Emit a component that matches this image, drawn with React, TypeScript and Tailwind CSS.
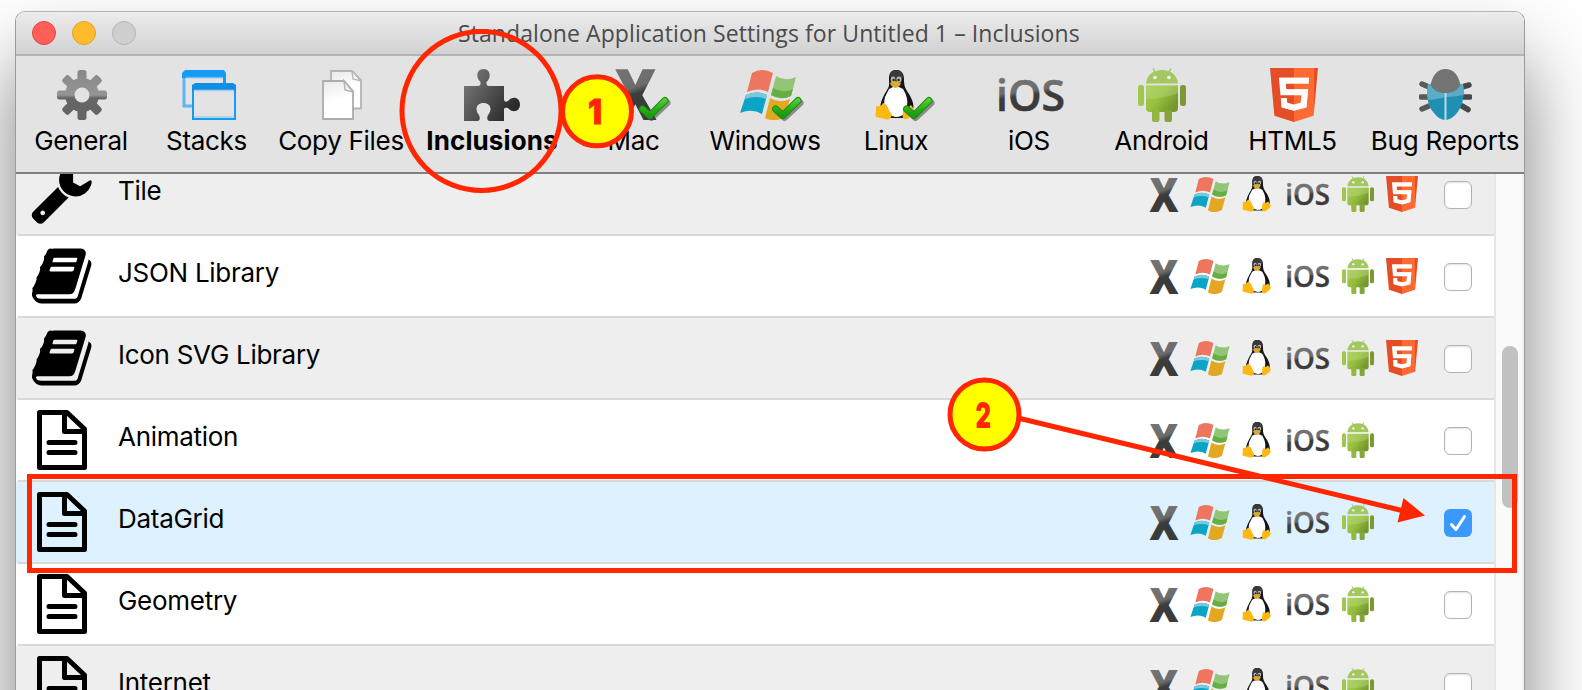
import type { ReactNode } from "react";

/* ---------- shared gradients ---------- */

function Defs() {
  return (
    <svg className="absolute h-0 w-0">
      <defs>
        <linearGradient id="metal" x1="0" y1="0" x2="0.15" y2="1">
          <stop offset="0" stopColor="#7c7c7c" />
          <stop offset="0.5" stopColor="#6c6c6c" />
          <stop offset="0.58" stopColor="#3c3c3c" />
          <stop offset="1" stopColor="#3a3a3a" />
        </linearGradient>
        <linearGradient id="gear" x1="0" y1="0" x2="0" y2="1">
          <stop offset="0" stopColor="#878787" />
          <stop offset="0.5" stopColor="#959595" />
          <stop offset="0.56" stopColor="#666" />
          <stop offset="1" stopColor="#636363" />
        </linearGradient>
        <linearGradient id="puzzle" x1="0" y1="0.2" x2="1" y2="0.8">
          <stop offset="0" stopColor="#787878" />
          <stop offset="0.9" stopColor="#2a2a2a" />
        </linearGradient>
        <linearGradient id="paper" x1="0" y1="0" x2="0.3" y2="1">
          <stop offset="0" stopColor="#e9e9e9" />
          <stop offset="0.6" stopColor="#ffffff" />
        </linearGradient>
        <linearGradient id="droid" x1="0" y1="0" x2="1" y2="0.6">
          <stop offset="0" stopColor="#a5cb55" />
          <stop offset="0.5" stopColor="#97c03d" />
          <stop offset="1" stopColor="#76962f" />
        </linearGradient>
        <linearGradient id="shield" x1="0" y1="0" x2="1" y2="0">
          <stop offset="0.5" stopColor="#e44d26" />
          <stop offset="0.5" stopColor="#ff6a33" />
          <stop offset="0.91" stopColor="#ff6a33" />
          <stop offset="0.91" stopColor="#e44d26" />
        </linearGradient>
        <linearGradient id="tick" x1="0" y1="0" x2="0" y2="1">
          <stop offset="0" stopColor="#4fcb2e" />
          <stop offset="0.6" stopColor="#27ad15" />
          <stop offset="1" stopColor="#1b9a10" />
        </linearGradient>
      </defs>
    </svg>
  );
}

/* ---------- platform logos ---------- */

function MacIcon({ className }: { className: string }) {
  return (
    <svg className={`overflow-visible ${className}`} viewBox="0 0 28 34" preserveAspectRatio="none">
      <text x="-0.500" y="34" fontSize="47.6" fontFamily="Open Sans" fontWeight="800" textLength="29" lengthAdjust="spacingAndGlyphs" fill="url(#metal)">
        X
      </text>
    </svg>
  );
}

function WindowsIcon({ className }: { className: string }) {
  return (
    <svg className={className} viewBox="0 0 56 50">
      <path d="M12 3 Q22 -3 33 3 L28 22 Q18 17 7 22Z" fill="#ee765e" />
      <path d="M36 6 Q45 12 56 7 L51 26 Q41 31 31 25Z" fill="#92c578" />
      <path d="M33 18 Q43 24 53 19 L51 26 Q41 31 31 25Z" fill="#66ae43" />
      <path d="M6 25 Q16 20 27 25 L22 44 Q12 38 0 43Z" fill="#0aa5c6" />
      <path d="M6 25 Q16 20 27 25 L26 29 Q16 25 5 29Z" fill="#7cc7dc" />
      <path d="M30 28 Q40 34 50 29 L45 47 Q35 53 25 48Z" fill="#e2a824" />
    </svg>
  );
}

function LinuxIcon({ className }: { className: string }) {
  return (
    <svg className={className} viewBox="0 0 40 50">
      <path d="M14 9 C14 2 17 0 21 0 C26 0 29 3 29 9 C29 16 30 18 34 24 C38 31 40 36 37 42 L30 48 H12 L5 38 C6 30 9 25 12 20 C15 16 14 13 14 9Z" fill="#151515" />
      <path d="M15 6 C15 2 18 0 21 0 C26 0 28 3 28 7 L27 9 H16Z" fill="#3a3a3a" />
      <path d="M14 19 Q21 14 28 19 C31 24 33 29 32 36 L28 45 Q20 50 13 43 C8 38 9 31 10 27Z" fill="#fff" />
      <ellipse cx="18" cy="9.500" rx="2.300" ry="3" fill="#b4b4b4" />
      <ellipse cx="24" cy="9.500" rx="2.600" ry="3" fill="#b4b4b4" />
      <circle cx="18.600" cy="10" r="1.200" fill="#222" />
      <circle cx="23.600" cy="10" r="1.200" fill="#222" />
      <path d="M15 13 Q20 9 26 13 Q25 17 20.500 18 Q16 17 15 13Z" fill="#dba92b" />
      <path d="M1 36 Q6 37 8 33 Q12 34 14 40 L17 45 Q15 51 10 49 L1 47 Q0 45 1 42Z" fill="#fdb813" />
      <path d="M29 36 Q33 39 36 35 Q38 38 40 41 Q39 45 35 47 Q31 51 28 48 Q27 44 29 36Z" fill="#fdb813" />
    </svg>
  );
}

function IosIcon({ className }: { className: string }) {
  return (
    <svg className={`overflow-visible ${className}`} viewBox="0 0 64 34">
      <text x="-3" y="33" fontSize="44" fontFamily="Open Sans" fontWeight="600" textLength="69" lengthAdjust="spacingAndGlyphs" fill="url(#metal)" stroke="url(#metal)" strokeWidth="0.600">
        iOS
      </text>
    </svg>
  );
}

function AndroidIcon({ className }: { className: string }) {
  return (
    <svg className={className} viewBox="0 0 48 54">
      <path d="M15 0.500 L17 4 M33 0.500 L31 4" stroke="#a2c65a" strokeWidth="1.500" />
      <path d="M8 15.500 C9 7 15 2 24 2 C33 2 39 7 40 15.500Z" fill="#a3c761" />
      <circle cx="17" cy="9.500" r="1.800" fill="#f4f8ea" />
      <circle cx="31" cy="9.500" r="1.800" fill="#f4f8ea" />
      <path d="M8 17.500 H40 V40 Q40 44 36 44 H12 Q8 44 8 40Z" fill="url(#droid)" />
      <path d="M8 17.500 H40 V25 Q24 31 8 31Z" fill="#c3dd8d" opacity="0.35" />
      <rect x="0" y="17" width="6" height="21" rx="2.500" fill="#a1c64f" />
      <rect x="42" y="17" width="6" height="21" rx="2.500" fill="#7b9a35" />
      <rect x="14" y="42" width="7.500" height="12" rx="2" fill="#93b83f" />
      <rect x="26.500" y="42" width="7.500" height="12" rx="2" fill="#84a638" />
    </svg>
  );
}

function Html5Icon({ className }: { className: string }) {
  return (
    <svg className={className} viewBox="0 0 384 448" preserveAspectRatio="none">
      <path d="M60 70 H325 L305 340 L192 370 L80 340Z" fill="#fff" />
      <path
        d="M0 0l34.900 395.800L191.500 448l157.600-52.200L384 0H0zm308.200 127.900H124.400l4.100 49.400h175.600l-13.600 148.400-97.900 27v.3h-1.100l-98.700-27.300-6-75.800h47.700L138 288l53.500 14.500 53.700-14.500 6-62.200H84.300L71.500 80.200h241.100l-4.400 47.700z"
        fill="url(#shield)"
      />
      <path d="M76 86 H308 L304 124 H120 L127 183 H300 L287 323 L192 349 L98 323 L93 254 H134" fill="none" stroke="#fff" strokeWidth="10" />
    </svg>
  );
}

/* ---------- toolbar icons ---------- */

function GearIcon() {
  return (
    <svg className="ml-[2px] h-[50px] w-[50px]" viewBox="0 0 50 50">
      <mask id="gearMask">
        {[0, 45, 90, 135].map((a) => (
          <rect key={a} x="20.500" y="0" width="9" height="50" rx="2.500" fill="#fff" transform={`rotate(${a} 25 25)`} />
        ))}
        <circle cx="25" cy="25" r="17" fill="#fff" />
        <circle cx="25" cy="25" r="7.500" fill="#000" />
      </mask>
      <rect width="50" height="50" fill="url(#gear)" mask="url(#gearMask)" />
    </svg>
  );
}

function StacksIcon() {
  return (
    <svg className="h-[50px] w-[54px]" viewBox="0 0 54 50">
      <path d="M2 6 V36 H12" fill="none" stroke="#5cb6f3" strokeWidth="3" />
      <path d="M0 8 V3 L3 0 H42 L44 3 V13 H41 V8Z" fill="#149bf5" />
      <path d="M4 7.500 H41" stroke="#6ab9ee" strokeWidth="1.500" />
      <rect x="11" y="17" width="42" height="32" fill="#e3e3e3" stroke="#149bf5" strokeWidth="2" />
      <path d="M10 21 V15 L13 13 H51 L54 15 V21Z" fill="#108ee6" />
      <path d="M12 20.500 H52 M12 47 H52" stroke="#a5cfea" strokeWidth="1.500" />
    </svg>
  );
}

function CopyIcon() {
  return (
    <svg className="ml-[1px] h-[50px] w-[40px]" viewBox="0 0 40 50">
      <path d="M9 1 H30 L39 10 V38.500 H9Z" fill="url(#paper)" stroke="#b4b4b4" strokeWidth="1.800" />
      <path d="M30 1 L31 9 L39 11Z" fill="#fafafa" stroke="#b9b9b9" strokeWidth="1.500" />
      <path d="M1 11 H22 L31 21 V49 H1Z" fill="url(#paper)" stroke="#acacac" strokeWidth="1.800" />
      <path d="M22 11 L23 20 L31 22Z" fill="#f4f4f4" stroke="#b4b4b4" strokeWidth="1.500" />
    </svg>
  );
}

function PuzzleIcon() {
  return (
    <svg className="h-[52px] w-[56px]" viewBox="0 0 56 52">
      <path
        d="M0 17 H14 Q17 17 16.500 13 C11 8 13 0 19.500 0 C26 0 28 8 22.500 13 Q22 17 25 17 H40 V31 Q41 34 44 32 C49 26 56 29 56 35.500 C56 42 49 45 44 39 Q41 38 40 40 V52 H25 Q22 51 24 46 C29 40 26 34 19.500 34 C13 34 10 40 15 46 Q17 51 14 52 H0 Z"
        fill="url(#puzzle)"
      />
    </svg>
  );
}

function BugIcon() {
  return (
    <svg className="h-[52px] w-[53px]" viewBox="0 0 53 52">
      <path d="M10 18 L3 15 M9 28 H2 M10 37 L3 40" stroke="#5a5a5a" strokeWidth="5.500" strokeLinecap="round" />
      <path d="M43 18 L50 16 M44 28 H51 M43 37 L49 40.500" stroke="#484848" strokeWidth="5.500" strokeLinecap="round" />
      <path d="M9 15 H44 C46 28 43 38 38 44 Q32 51 26.500 51 Q20 51 15 44 C9 38 7 28 9 15Z" fill="#1f8fb3" />
      <path d="M9 15 H44 Q45.500 21 44.500 26 Q35 28 26.500 28 Q20 30 9 31 Q7 24 9 15Z" fill="#5aacc8" />
      <path d="M26.500 24 V51" stroke="#b5dbe8" strokeWidth="2" />
      <path d="M11.500 16 C14 5 19 0 26.500 0 C34 0 39 5 41.500 16 C38 22 33 24 26.500 24 C20 24 15 22 11.500 16Z" fill="#737373" />
    </svg>
  );
}

function GreenTick({ className }: { className: string }) {
  return (
    <svg className={`overflow-visible ${className}`} viewBox="0 0 32 26">
      <path d="M5.500 14 L12.500 20.500 L28 6" fill="none" stroke="#444" strokeOpacity="0.55" strokeWidth="7" strokeLinejoin="round" strokeLinecap="round" />
      <path d="M3.500 12 L11 18.500 L26 3.500" fill="none" stroke="#1c8d12" strokeWidth="7" strokeLinejoin="round" strokeLinecap="round" />
      <path d="M3.500 12 L11 18.500 L26 3.500" fill="none" stroke="url(#tick)" strokeWidth="5" strokeLinejoin="round" strokeLinecap="round" />
    </svg>
  );
}

function Ticked({ children, tick }: { children: ReactNode; tick: string }) {
  return (
    <div className="relative">
      {children}
      <GreenTick className={tick} />
    </div>
  );
}

type Tool = { label: string; box: string; icon: ReactNode; text?: string };

const tools: Tool[] = [
  { label: "General", box: "w-[130px]", icon: <GearIcon /> },
  { label: "Stacks", box: "w-[121px]", icon: <div className="pl-[4px]"><StacksIcon /></div> },
  { label: "Copy Files", box: "w-[148px]", icon: <CopyIcon /> },
  { label: "Inclusions", box: "w-[153px]", icon: <PuzzleIcon />, text: "pl-[1px] font-bold tracking-[0.1px]" },
  {
    label: "Mac",
    box: "w-[131px]",
    icon: (
      <Ticked tick="absolute left-[28px] top-[27px] h-[26px] w-[32px]">
        <MacIcon className="ml-[4px] h-[50px] w-[41px]" />
      </Ticked>
    ),
  },
  {
    label: "Windows",
    box: "w-[132px]",
    icon: (
      <Ticked tick="absolute left-[38px] top-[27px] h-[26px] w-[32px]">
        <WindowsIcon className="ml-[6px] h-[50px] w-[56px]" />
      </Ticked>
    ),
  },
  {
    label: "Linux",
    box: "w-[130px]",
    icon: (
      <Ticked tick="absolute left-[28px] top-[27px] h-[26px] w-[32px]">
        <LinuxIcon className="mr-[3px] h-[50px] w-[40px]" />
      </Ticked>
    ),
  },
  { label: "iOS", box: "w-[136px]", icon: <IosIcon className="ml-[4px] h-[34px] w-[64px]" /> },
  { label: "Android", box: "w-[129px]", icon: <AndroidIcon className="h-[54px] w-[48px]" /> },
  { label: "HTML5", box: "w-[133px]", icon: <Html5Icon className="ml-[3px] h-[54px] w-[48px]" /> },
  { label: "Bug Reports", box: "w-[172px]", icon: <BugIcon />, text: "tracking-[-0.2px]" },
];

/* ---------- list ---------- */

function WrenchIcon() {
  return (
    <svg className="mt-[5px] ml-[13px] h-[65.500px] w-[65.500px] shrink-0" viewBox="0 0 1792 1792">
      <path d="M384 1472q0-26-19-45t-45-19-45 19-19 45 19 45 45 19 45-19 19-45zm644-420l-682 682q-37 37-90 37-52 0-91-37l-106-108q-38-36-38-90 0-53 38-91l681-681q39 98 114.500 173.500t173.500 114.500zm634-435q0 39-23 106-47 134-164.500 217.500t-258.500 83.500q-185 0-316.500-131.500t-131.500-316.500 131.500-316.500 316.500-131.500q58 0 121.500 16.500t107.500 46.500q16 11 16 28t-16 28l-293 169v224l193 107q5-3 79-48.500t135.500-81 70.500-35.500q15 0 23.500 10t8.500 25z" />
    </svg>
  );
}

function BookIcon() {
  return (
    <svg className="mt-[8px] ml-[14px] h-[64px] w-[64px] shrink-0" viewBox="0 0 1792 1792">
      <path d="M1639 478q40 57 18 129l-275 906q-19 64-76.500 107.500t-122.500 43.500h-923q-77 0-148.500-53.500t-99.500-131.500q-24-67-2-127 0-4 3-27t4-37q1-8-3-21.500t-3-19.500q2-11 8-21t16.500-23.500 16.500-23.500q23-38 45-91.500t30-91.500q3-10 .5-30t-.5-28q3-11 17-28t17-23q21-36 42-92t25-90q1-9-2.500-32t.5-28q4-13 22-30.500t22-22.500q19-26 42.500-84.500t27.500-96.500q1-8-3-25.500t-2-26.500q2-8 9-18t18-23 17-21q8-12 16.500-30.500t15-35 16-36 19.500-32 26.500-23.500 36-11.500 47.500 5.500l-1 3q38-9 51-9h761q74 0 114 56t18 130l-274 906q-36 119-71.500 153.500t-128.500 34.500h-869q-27 0-38 15-11 16-1 43 24 70 144 70h923q29 0 56-15.500t35-41.500l300-987q7-22 5-57 38 15 59 43zm-1064 2q-4 13 2 22.500t20 9.500h608q13 0 25.500-9.500t16.500-22.500l21-64q4-13-2-22.500t-20-9.500h-608q-13 0-25.500 9.500t-16.500 22.500zm-83 256q-4 13 2 22.500t20 9.500h608q13 0 25.500-9.500t16.500-22.500l21-64q4-13-2-22.500t-20-9.500h-608q-13 0-25.500 9.500t-16.500 22.500z" />
    </svg>
  );
}

function FileIcon() {
  return (
    <svg className="mt-[10px] ml-[19px] h-[60px] w-[50px] shrink-0" viewBox="0 0 50 60" fill="none" stroke="#000" strokeWidth="5" strokeLinejoin="round">
      <path d="M2.500 2.500 H30 L47.500 19 V57.500 H2.500Z" />
      <path d="M27.500 2.500 V21.500 H47.500" />
      <path d="M12 32.500 H38 M12 42.500 H38" strokeLinecap="round" />
    </svg>
  );
}

type Row = { name: string; icon: ReactNode; bg: string; html5?: boolean; checked?: boolean };

const rows: Row[] = [
  { name: "Tile", icon: <WrenchIcon />, bg: "bg-[#eeeeee]", html5: true },
  { name: "JSON Library", icon: <BookIcon />, bg: "bg-white", html5: true },
  { name: "Icon SVG Library", icon: <BookIcon />, bg: "bg-[#eeeeee]", html5: true },
  { name: "Animation", icon: <FileIcon />, bg: "bg-white" },
  { name: "DataGrid", icon: <FileIcon />, bg: "bg-[#def1fe]", checked: true },
  { name: "Geometry", icon: <FileIcon />, bg: "bg-white" },
  { name: "Internet", icon: <FileIcon />, bg: "bg-[#eeeeee]" },
];

function Checkbox({ checked }: { checked?: boolean }) {
  if (checked) {
    return (
      <div className="mt-[27px] flex h-[28px] w-[28px] items-center justify-center rounded-[6px] bg-[#3b99fc]">
        <svg className="h-[20px] w-[20px]" viewBox="0 0 20 20">
          <path d="M3.500 11.500 L8 16.500 L16.500 3.500" fill="none" stroke="#fff" strokeWidth="3" strokeLinecap="round" strokeLinejoin="round" />
        </svg>
      </div>
    );
  }
  return <div className="mt-[27px] h-[28px] w-[28px] rounded-[6px] border border-[#b4b4b4] bg-white shadow-[inset_0_1px_2px_rgba(0,0,0,0.12)]" />;
}

function ListRow({ row }: { row: Row }) {
  return (
    <div className={`h-[82px] shrink-0 pl-[2px] ${row.bg}`}>
      <div className="flex h-full items-start border-b-2 border-[#d9d9d9]">
        <div className="w-[100px] shrink-0">{row.icon}</div>
        <div className="mt-[21px] flex-1 text-[26px] leading-[32px] tracking-[-0.28px] whitespace-nowrap text-black">{row.name}</div>
        <div className="flex items-start">
          <MacIcon className="mt-[24px] mr-[12px] h-[34px] w-[28px]" />
          <WindowsIcon className="mt-[23px] mr-[12px] h-[35px] w-[40px]" />
          <LinuxIcon className="mt-[22px] mr-[15px] h-[36px] w-[29px]" />
          <IosIcon className="mt-[30px] mr-[12px] h-[22px] w-[44px]" />
          <AndroidIcon className="mt-[22px] mr-[12px] h-[36px] w-[32px]" />
          <div className="w-[58px]">{row.html5 && <Html5Icon className="mt-[22px] h-[36px] w-[32px]" />}</div>
          <Checkbox checked={row.checked} />
          <div className="w-[22px]" />
        </div>
      </div>
    </div>
  );
}

/* ---------- callouts drawn over the window ---------- */

function Callouts() {
  return (
    <svg className="pointer-events-none absolute left-0 top-0 h-[690px] w-[1582px]" viewBox="0 0 1582 690">
      <circle cx="481.500" cy="111" r="79.500" fill="none" stroke="#ff2600" strokeWidth="5" />
      <circle cx="597" cy="111.300" r="34.500" fill="#ffff00" stroke="#ff2600" strokeWidth="5" />
      <text x="588" y="123.500" fontSize="34" fontFamily="Inter" fontWeight="900" textLength="14" lengthAdjust="spacingAndGlyphs" fill="#ff2600" stroke="#ff2600" strokeWidth="0.800">
        1
      </text>
      <rect x="29.500" y="476.500" width="1485" height="94" fill="none" stroke="#ff2600" strokeWidth="5" />
      <path d="M1020 418.500 L1402 510.500" stroke="#ff2600" strokeWidth="5" />
      <path d="M1425 515.500 L1403.500 498 L1397.500 522.500Z" fill="#ff2600" />
      <circle cx="984.500" cy="414.500" r="34.500" fill="#ffff00" stroke="#ff2600" strokeWidth="5" />
      <text x="975.500" y="427.500" fontSize="36" fontFamily="Inter" fontWeight="900" textLength="15.500" lengthAdjust="spacingAndGlyphs" fill="#ff2600">
        2
      </text>
    </svg>
  );
}

export default function App() {
  return (
    <div className="relative h-[690px] w-full overflow-hidden bg-white pt-[11px] pl-[15px] font-['Inter',sans-serif]">
      <Defs />
      <div className="h-[1000px] w-[1510px] overflow-hidden rounded-t-[10px] border border-[#9a9a9a] border-t-[#b4b4b4] bg-white shadow-[0_50px_80px_rgba(0,0,0,0.5)]">
        <div className="flex h-[44px] items-center border-b-2 border-[#b4b4b4] bg-linear-to-b from-[#ececec] to-[#d2d2d2]">
          <div className="flex w-[442px] gap-[16px] pl-[16px]">
            <div className="h-[24px] w-[24px] rounded-full border border-[#e0443e] bg-[#ff5f57]" />
            <div className="h-[24px] w-[24px] rounded-full border border-[#dea123] bg-[#ffbd2e]" />
            <div className="h-[24px] w-[24px] rounded-full border border-[#b4b4b4] bg-[#cfcfcf]" />
          </div>
          <div className="font-['Open_Sans',sans-serif] text-[23px] leading-[30px] font-medium tracking-[0.08px] whitespace-nowrap text-[#4b4b4b]">
            Standalone Application Settings for Untitled 1 – Inclusions
          </div>
        </div>
        <div className="flex h-[118px] border-b-2 border-[#808080] bg-[#e3e3e3]">
          {tools.map((t) => (
            <div key={t.label} className={`flex shrink-0 flex-col items-center pt-[12px] ${t.box}`}>
              <div className="flex h-[54px] items-center justify-center">{t.icon}</div>
              <div className={`mt-[3px] text-[26px] leading-[32px] whitespace-nowrap text-black ${t.text ?? "tracking-[-0.3px]"}`}>{t.label}</div>
            </div>
          ))}
        </div>
        <div className="flex h-[838px] overflow-hidden">
          <div className="-mt-[20px] flex w-[1478px] flex-col">
            {rows.map((r) => (
              <ListRow key={r.name} row={r} />
            ))}
          </div>
          <div className="flex-1 border-r-2 border-l-2 border-r-[#f0f0f0] border-l-[#e6e6e6] bg-[#fafafa] pt-[172px] pl-[6px]">
            <div className="h-[162px] w-[16px] rounded-full bg-[#c1c1c1]" />
          </div>
        </div>
      </div>
      <Callouts />
    </div>
  );
}
